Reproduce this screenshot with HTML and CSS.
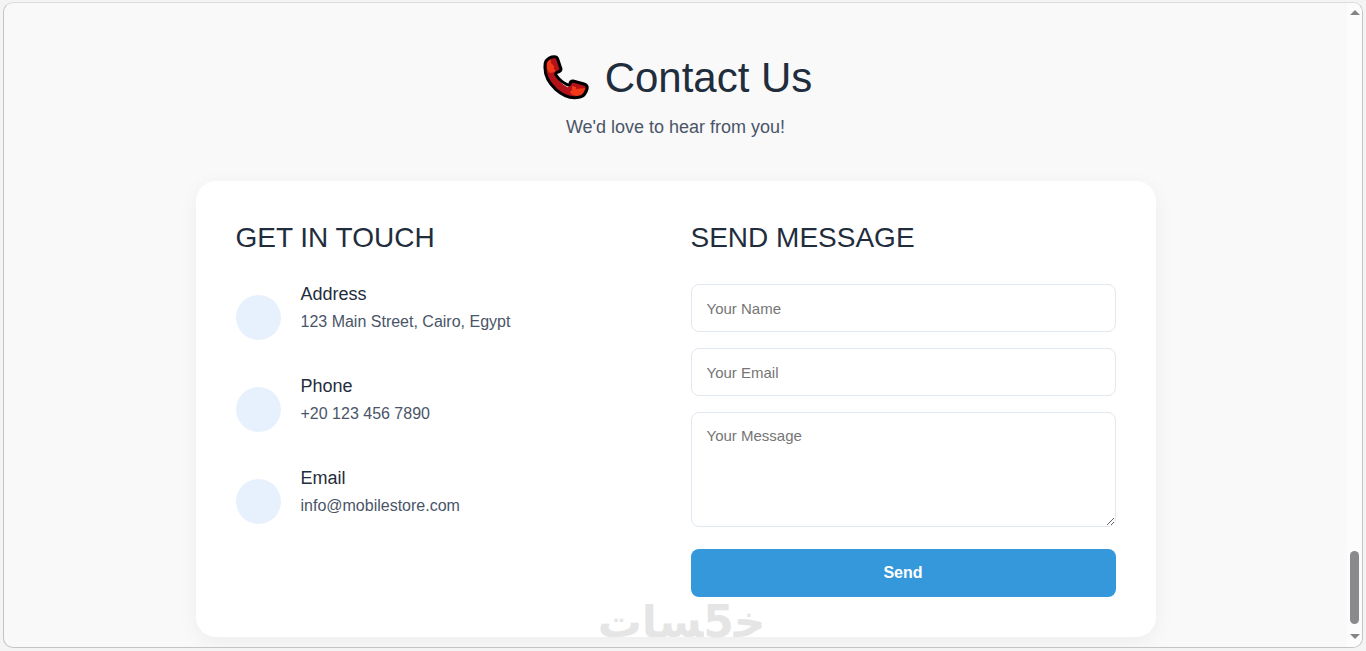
FILE: index.html
```html
<!DOCTYPE html>
<html lang="en">
<head>
<meta charset="utf-8">
<meta name="viewport" content="width=device-width, initial-scale=1">
<title>Contact Us</title>
<link rel="stylesheet" href="styles.css">
</head>
<body>
<div class="frame">
  <main class="contact">
    <header class="heading">
      <h1 class="title">
        <svg class="phone" viewBox="0 0 46 46" aria-hidden="true">
          <path class="phone-body" d="M3 6Q7 1 13 2Q14 2 15 5L18 14Q18 16 15 17Q12 18 12 20Q17 28 24 32Q26 33 27 29Q27 27 30 27L41 30Q44 31 43 34Q42 41 37 42C20 46 1 28 2 11Q2 8 3 6Z"/>
          <path class="phone-light" d="M4 8Q5 5 8 5V8L11 11V14L13 16Q10 18 7 18Q3 15 4 8ZM29 31L33 32V34L42 33Q41 40 35 41Q28 40 27 37L29 35Z"/>
          <path class="phone-line" d="M3 6Q7 1 13 2Q14 2 15 5L18 14Q18 16 15 17Q12 18 13 20Q17 26 23 29Q26 31 27 29Q27 26 30 26L41 29Q45 30 44 34Q42 41 37 42C20 46 1 28 2 11Q2 8 3 6Z"/>
        </svg>
        <span>Contact Us</span>
      </h1>
      <p class="subtitle">We'd love to hear from you!</p>
    </header>
    <div class="card">
      <section>
        <h2 class="section-title">GET IN TOUCH</h2>
        <ul class="details">
          <li class="detail"><span class="dot"></span><div><h3 class="label">Address</h3><p class="value">123 Main Street, Cairo, Egypt</p></div></li>
          <li class="detail"><span class="dot"></span><div><h3 class="label">Phone</h3><p class="value">+20 123 456 7890</p></div></li>
          <li class="detail"><span class="dot"></span><div><h3 class="label">Email</h3><p class="value">info@mobilestore.com</p></div></li>
        </ul>
      </section>
      <section>
        <h2 class="section-title">SEND MESSAGE</h2>
        <form class="form">
          <input class="field" type="text" placeholder="Your Name" aria-label="Your Name">
          <input class="field" type="email" placeholder="Your Email" aria-label="Your Email">
          <textarea class="field message" placeholder="Your Message" aria-label="Your Message"></textarea>
          <button class="send" type="submit">Send</button>
        </form>
      </section>
    </div>
    <div class="watermark" lang="ar" dir="rtl">خ&zwj;5&zwj;سات</div>
  </main>
  <div class="scrollbar" aria-hidden="true">
    <span class="arrow arrow-up"></span>
    <span class="thumb"></span>
    <span class="arrow arrow-down"></span>
  </div>
</div>
</body>
</html>
```
FILE: styles.css
```css
* { box-sizing: border-box; }
html { height: 100%; }
body {
  margin: 0;
  height: 100%;
  padding: 2px 3px 3px;
  background: #f4f4f4;
  font-family: "Liberation Sans", Arial, sans-serif;
  color: #1f2d3d;
}
h1, h2, h3, p, ul { margin: 0; padding: 0; font-weight: 400; }
.frame {
  display: flex;
  min-height: 100%;
  border: 1px solid #c4c4c4;
  border-top-color: #dcdcdc;
  border-radius: 10px;
  background: #f9f9f9;
  overflow: hidden;
}
.contact {
  position: relative;
  flex: 1;
  padding: 51px 20px 9px;
}
.heading { text-align: center; margin-bottom: 39px; }
.title {
  display: flex;
  justify-content: center;
  align-items: center;
  gap: 16px;
  padding-left: 4px;
  font-size: 42px;
  line-height: 48px;
}
.phone { width: 46px; height: 46px; }
.phone-body { fill: #b41119; }
.phone-light { fill: #f03a17; }
.phone-line { fill: none; stroke: #000; stroke-width: 3; stroke-linejoin: round; }
.subtitle {
  margin-top: 10px;
  font-size: 18px;
  line-height: 30px;
  color: #4a5568;
}
.card {
  display: grid;
  grid-template-columns: 1fr 1fr;
  gap: 30px;
  max-width: 960px;
  margin: 0 auto;
  padding: 40px;
  border-radius: 20px;
  background: #fff;
  box-shadow: 0 5px 20px rgba(0, 0, 0, 0.05);
}
.section-title { font-size: 28px; line-height: 33px; margin-bottom: 30px; }
.details { display: grid; gap: 36px; list-style: none; }
.detail { display: flex; align-items: flex-end; gap: 20px; }
.dot {
  width: 45px;
  height: 45px;
  border-radius: 50%;
  background: #e7f1fe;
}
.label { font-size: 18px; line-height: 20px; margin-bottom: 5px; }
.value { font-size: 16px; line-height: 26px; padding-bottom: 5px; color: #4a5568; }
.form { display: grid; gap: 16px; }
.field {
  width: 100%;
  height: 48px;
  padding: 14px 15px;
  border: 1px solid #e2e8f0;
  border-radius: 8px;
  background: #fff;
  font: 15px/18px "Liberation Sans", Arial, sans-serif;
  color: #1f2d3d;
}
.field::placeholder { color: #757575; }
.message { display: block; height: 115px; resize: vertical; }
.send {
  height: 48px;
  margin-top: 6px;
  border: 0;
  border-radius: 8px;
  background: #3498db;
  font: bold 16px/18px "Liberation Sans", Arial, sans-serif;
  color: #fff;
}
.watermark {
  position: absolute;
  left: 50%;
  bottom: 3px;
  width: 164px;
  margin-left: -74px;
  font: bold 44px/44px "DejaVu Sans", sans-serif;
  text-align: center;
  white-space: nowrap;
  color: #e5e5e5;
  pointer-events: none;
}
.scrollbar {
  display: flex;
  flex-direction: column;
  align-items: center;
  width: 15px;
  padding: 7px 0 8px;
  background: #fcfcfc;
}
.arrow { border: 5px solid transparent; border-top-width: 0; border-bottom-width: 0; }
.arrow-up { border-bottom: 5px solid #858585; }
.arrow-down { border-top: 5px solid #858585; }
.thumb {
  width: 9px;
  height: 73px;
  margin-top: auto;
  margin-bottom: 10px;
  border-radius: 5px;
  background: #8a8a8c;
}
```
